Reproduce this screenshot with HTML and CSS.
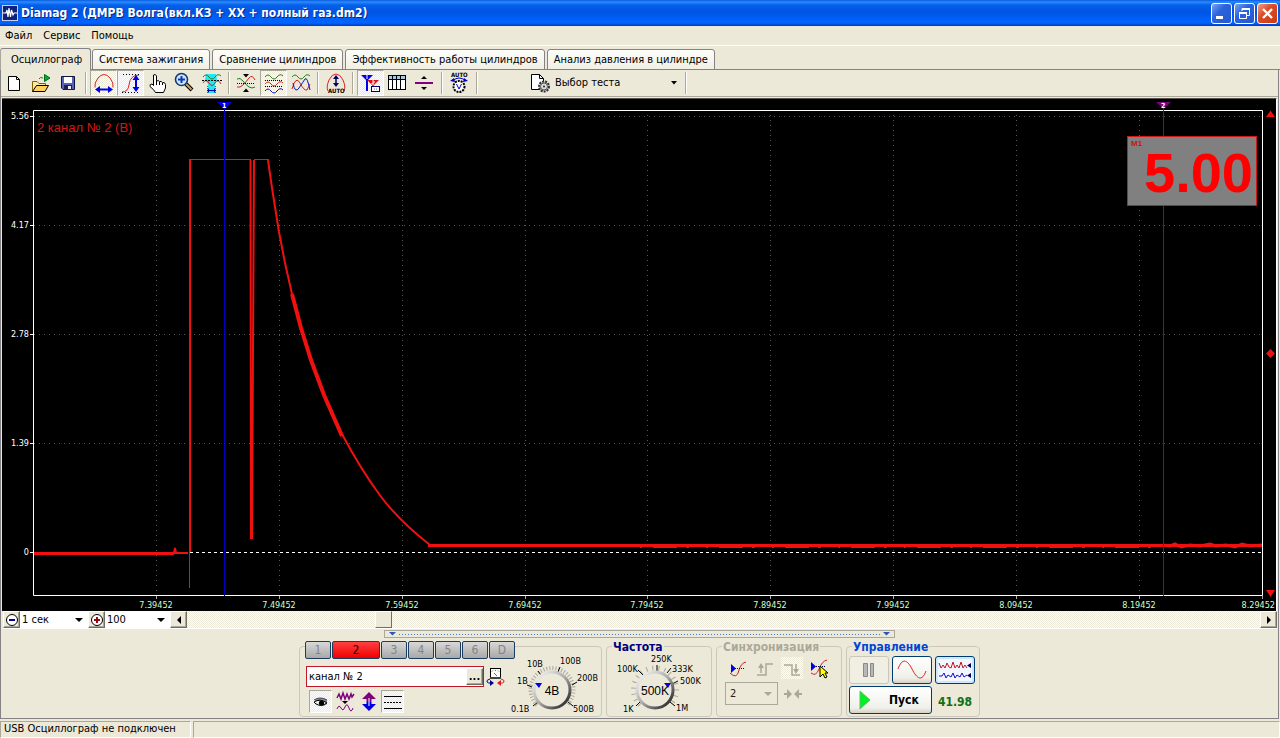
FILE: index.html
```html
<!DOCTYPE html>
<html lang="ru">
<head>
<meta charset="utf-8">
<title>Diamag 2</title>
<link rel="stylesheet" href="styles.css">
</head>
<body>
<header class="titlebar">
  <svg class="app-icon" width="16" height="16" viewBox="0 0 16 16"><rect width="16" height="16" fill="#c8d4e8"/><rect x="1" y="1" width="14" height="14" fill="#10207c"/><path d="M1 8H4L5 5L6 12L7 3L8.500 12L9.500 5L11 10L12 8H15" fill="none" stroke="#fff" stroke-width="1.200"/></svg>
  <h1 class="title">Diamag 2 (ДМРВ Волга(вкл.КЗ + ХХ + полный газ.dm2)</h1>
  <button class="win" aria-label="Свернуть"><svg width="19" height="19"><path d="M4 13.500H11" stroke="#fff" stroke-width="3"/></svg></button>
  <button class="win" aria-label="Восстановить"><svg width="19" height="19" fill="none" stroke="#fff"><path d="M7 7V4.500H14.500V11.500H12" /><path d="M7 5H15" stroke-width="2"/><path d="M4.500 8.500H11.500V14.500H4.500Z"/><path d="M4 9H12" stroke-width="2"/></svg></button>
  <button class="win close" aria-label="Закрыть"><svg width="19" height="19"><path d="M5 5L14 14M14 5L5 14" stroke="#fff" stroke-width="2.400"/></svg></button>
</header>
<nav class="menu"><button>Файл</button><button>Сервис</button><button>Помощь</button></nav>
<nav class="tabs">
  <button class="tab active">Осциллограф</button><button class="tab">Система зажигания</button><button class="tab">Сравнение цилиндров</button><button class="tab">Эффективность работы цилиндров</button><button class="tab">Анализ давления в цилиндре</button>
</nav>
<main class="frame">
  <div class="toolbar">
    <button class="tool" aria-label="Новый"><svg width="22" height="22"><path d="M4.500 4.500H12.500L15.500 7.500V18.500H4.500Z" fill="#fff" stroke="#000"/><path d="M12.500 4.500V7.500H15.500" fill="none" stroke="#000"/></svg></button>
    <button class="tool" aria-label="Открыть"><svg width="22" height="22"><path d="M1.500 19.500V9.500H6L8 11.500H14.500V14" fill="#ffe9a0" stroke="#806000"/><path d="M1.500 19.500L5.500 13.500H17.500L14 19.500Z" fill="#ffd060" stroke="#000"/><path d="M13.500 2.500V9.500L19 6Z" fill="#00b030" stroke="#006818"/><path d="M8 7Q9 4.500 12 6" fill="none" stroke="#555"/></svg></button>
    <button class="tool" aria-label="Сохранить"><svg width="22" height="22"><path d="M3.500 4.500H16.500V17.500H5L3.500 16Z" fill="#5860c0" stroke="#101040"/><rect x="6" y="5" width="8" height="6" fill="#fff"/><path d="M6 13H14V18H6Z" fill="#202050"/><rect x="10" y="14" width="3" height="3" fill="#eee"/></svg></button>
    <i class="sep"></i>
    <button class="tool on" aria-label="Ширина"><svg width="22" height="22"><path d="M2 15.500Q1 11 5 6Q8 2.500 11 2.500T17 6Q21 11 20 15.500" fill="none" stroke="#e02020"/><path d="M6 17.500H16" stroke="#0000e0" stroke-width="2"/><path d="M2 17.500L7 14V21ZM20 17.500L15 14V21Z" fill="#0000e0"/></svg></button>
    <button class="tool on" aria-label="Высота"><svg width="22" height="22"><path d="M2 20Q8 20 9 13Q10 3 19 3" fill="none" stroke="#e02020"/><path d="M3 2.500H21M2 20.500H20" stroke="#000" stroke-dasharray="1 2"/><path d="M16 6V17" stroke="#0000e0" stroke-width="2"/><path d="M16 3L12.500 8H19.500ZM16 20L12.500 15H19.500Z" fill="#0000e0"/></svg></button>
    <button class="tool" aria-label="Рука"><svg width="22" height="22"><path d="M6.500 3Q8.500 1.500 9.500 4V9Q11.500 8 12.500 9.500Q14.500 9 15.500 10.500Q18 10 18.500 12.500V16L16.500 20.500H8.500Q7 17.500 3 14.500Q2.500 12 5 12L6.500 13.500Z" fill="#fff" stroke="#000"/><path d="M9.500 9V13M12.500 10V13M15.500 11V13" stroke="#000"/></svg></button>
    <button class="tool" aria-label="Лупа"><svg width="22" height="22"><path d="M12 12L18 18" stroke="#000" stroke-width="4"/><path d="M12 12L17.500 17.500" stroke="#d0a050" stroke-width="2"/><circle cx="7.500" cy="7.500" r="6" fill="#c8e8ff" stroke="#183870" stroke-width="1.600"/><path d="M4 7.500H11M7.500 4V11" stroke="#1038b0" stroke-width="2"/></svg></button>
    <button class="tool" aria-label="Область"><svg width="22" height="22"><path d="M5 2H15L16 8L14 12V21H7V12L4 8Z" fill="#20e8f0"/><path d="M2 5Q5 1 8 5T14 5T20 4" fill="none" stroke="#208020"/><path d="M2 11Q5 6 8 11T14 11T20 12" fill="none" stroke="#d02020"/><path d="M1 8.500H21" stroke="#000" stroke-dasharray="2 1"/><path d="M6.500 14V21M14.500 14V21" stroke="#088" stroke-dasharray="1 1"/><path d="M8 18.500H13" stroke="#00a"/><path d="M6 18.500L8 16V21ZM15 18.500L13 16V21Z" fill="#00a"/></svg></button>
    <i class="sep"></i>
    <button class="tool" aria-label="Совместить"><svg width="22" height="22" fill="none"><path d="M1 7Q4 5 7 9T13 15T19 15" stroke="#208020"/><path d="M1 15Q4 16 7 13T13 6T19 8" stroke="#d02020"/><path d="M1 11.500H19" stroke="#000" stroke-dasharray="1 1"/><path d="M7 2H13L10 5.500ZM7 20H13L10 16.500Z" fill="#000"/></svg></button>
    <button class="tool on" aria-label="Разнести"><svg width="22" height="22" fill="none"><path d="M2 5Q5 1 8 5T14 5T20 4" stroke="#208020"/><path d="M2 8.500H20M2 14.500H20" stroke="#000" stroke-dasharray="1 1"/><path d="M2 12Q5 8 8 12T14 12T20 11" stroke="#d02020"/><path d="M2 19Q5 15 8 19T14 19T20 18" stroke="#1010c0"/></svg></button>
    <button class="tool" aria-label="Наложить"><svg width="22" height="22" fill="none"><path d="M2 5Q5 1 8 5T14 5T20 4" stroke="#208020"/><path d="M2 17Q6 3 10 11T17 18L20 12" stroke="#d02020"/><path d="M3 11Q5 22 9 16T15 7T20 18" stroke="#1010c0"/></svg></button>
    <i class="sep"></i>
    <button class="tool" aria-label="Авто высота"><svg width="22" height="22"><path d="M3 19Q1 15 4 8Q7 2 11 2T18 8Q21 15 19 19" fill="none" stroke="#e02020"/><path d="M11 5V13" stroke="#006" stroke-width="1.500"/><path d="M11 3L8 7H14ZM11 15L8 11H14Z" fill="#006"/><text class="tiny" x="3" y="21">AUTO</text></svg></button>
    <i class="sep"></i>
    <button class="tool on" aria-label="Маркеры"><svg width="22" height="22"><path d="M1 3H13L7 9Z" fill="#0000e0"/><path d="M7 7V19" stroke="#0000e0" stroke-width="2"/><path d="M7 8H19L13 14Z" fill="#e01010"/><path d="M13 11V19" stroke="#e01010"/><path d="M7 3V7M12 9H14V11H12V12H14" stroke="#fff" fill="none"/><rect x="11.500" y="14.500" width="8" height="5" fill="#fff" stroke="#006"/><path d="M14 17H17" stroke="#66c" stroke-dasharray="1 1"/></svg></button>
    <button class="tool" aria-label="Таблица"><svg width="22" height="22"><rect x="1.500" y="3.500" width="17" height="14" fill="#fff" stroke="#000"/><rect x="2" y="4" width="16" height="3" fill="#a8c8e8"/><path d="M2 7.500H18M5.500 4V17M9.500 4V17M13.500 4V17" stroke="#000"/></svg></button>
    <button class="tool" aria-label="Линия"><svg width="22" height="22"><path d="M1 11H19" stroke="#800080" stroke-width="2"/><path d="M10 4L7 7H13ZM10 18L7 15H13Z"/></svg></button>
    <i class="sep"></i>
    <button class="tool" aria-label="Авто вольтметр"><svg width="22" height="22"><text class="tiny" x="2" y="5">AUTO</text><path d="M4 8.500Q7 6 10 6T17 8.500" fill="none" stroke="#0000c0"/><path d="M1 9L5 6L6 10ZM19 9L15 6L14 10Z" fill="#0000c0"/><circle cx="10" cy="14.500" r="5.500" fill="#fff" stroke="#000" stroke-width="2" stroke-dasharray="2 1"/><path d="M7.500 12L10 17L12.500 12" fill="none" stroke="#0000c0"/></svg></button>
    <i class="sep"></i>
    <button class="test"><svg width="22" height="22"><path d="M2.500 2.500H10.500L14.500 6.500V17.500H2.500Z" fill="#fff" stroke="#000"/><path d="M10.500 2.500V6.500H14.500" fill="none" stroke="#000"/><circle cx="15" cy="14.500" r="5" fill="#ccc" stroke="#333" stroke-width="2" stroke-dasharray="2 1"/><circle cx="15" cy="14.500" r="3.500" fill="#ddd" stroke="#555"/><circle cx="15" cy="14.500" r="1" fill="#222"/></svg><span>Выбор теста</span><svg width="7" height="4"><path d="M0 0H6L3 3.500Z"/></svg></button>
    <i class="sep"></i>
  </div>

  <div class="scope">
    <svg class="plot" viewBox="3 99 1273 512" role="img" aria-label="Осциллограмма">
      <g stroke="#585858" stroke-dasharray="1 4" fill="none">
        <path d="M34 116.500H1262M34 225.500H1262M34 334.500H1262M34 443.500H1262"/>
        <path d="M156.500 115V595M279.500 115V595M402.500 115V595M525.500 115V595M647.500 115V595M770.500 115V595M893.500 115V595M1016.500 115V595M1139.500 115V595"/>
      </g>
      <path d="M34 552.500H1262" stroke="#fff" stroke-dasharray="3 3"/>
      <g fill="none" stroke="#f01010">
        <path d="M34 553H174L175 548L176 553H188" stroke-width="2"/>
        <path d="M34 554H174" stroke-width="2"/>
        <path d="M189.500 588V480"/>
        <path d="M190 552V160" stroke-width="2"/>
        <path d="M189 159.500H251M254 159.500H269"/>
        <path d="M250.500 160L251 538L252 538L254 160" stroke-width="2"/>
        <path d="M268 160L272 188L279 232L285 263L292 294L301 328L311 360L324 395L342 434Q360 468 379 494T430 545" stroke-width="2"/>
        <path d="M292 294L301 328L311 360L324 395L342 436" stroke-width="4"/>
        <path d="M428 545.500H1262" stroke-width="3"/>
        <path d="M640 546H1163" stroke-width="4" stroke-dasharray="2 11 24 9 3 17"/>
        <path d="M1163 545L1170 546L1175 544L1181 547L1190 545L1200 546L1210 544L1216 546L1226 545L1235 547L1242 544L1250 546L1262 545" stroke-width="3"/>
      </g>
      <path d="M33.500 110.500H1262.500V595.500H33.500Z" fill="none" stroke="#fff"/>
      <path d="M30 116.500H34M30 225.500H34M30 334.500H34M30 443.500H34M30 552.500H34" stroke="#fff"/>
      <path d="M156.500 596V599M279.500 596V599M402.500 596V599M525.500 596V599M647.500 596V599M770.500 596V599M893.500 596V599M1016.500 596V599M1139.500 596V599M1262.500 596V599" stroke="#aaa"/>
      <path d="M224.500 104V596" stroke="#0000c0"/><path d="M217 102H232L224.500 109Z" fill="#0000e0"/>
      <path d="M1163.500 104V596" stroke="#780878"/><path d="M1156 102H1171L1163.500 109Z" fill="#800080"/>
      <g class="mark"><text x="222" y="108">1</text><text x="1161" y="108">2</text></g>
      <g class="axis-y"><text x="29" y="119">5.56</text><text x="29" y="228">4.17</text><text x="29" y="337">2.78</text><text x="29" y="446">1.39</text><text x="29" y="555">0</text></g>
      <g class="axis-x"><text x="156" y="608">7.39452</text><text x="279" y="608">7.49452</text><text x="402" y="608">7.59452</text><text x="525" y="608">7.69452</text><text x="647" y="608">7.79452</text><text x="770" y="608">7.89452</text><text x="893" y="608">7.99452</text><text x="1016" y="608">8.09452</text><text x="1139" y="608">8.19452</text><text class="last" x="1275" y="608">8.29452</text></g>
      <text class="channel-label" x="37" y="132">2 канал № 2 (В)</text>
      <path d="M1266 117H1275L1270.500 110.500ZM1266 590H1275L1270.500 597ZM1266 353.500L1270.500 349L1275 353.500L1270.500 358Z" fill="#f01010"/>
      <rect x="1127.500" y="136.500" width="129" height="69" fill="#808080" stroke="#d01818"/>
      <text class="meter-name" x="1131" y="146">M1</text>
      <text class="meter" x="1144" y="192">5.00</text>
    </svg>
  </div>

  <div class="timebar">
    <button class="raised" aria-label="Уменьшить"><svg width="14" height="14"><circle cx="7" cy="7" r="5.500" fill="#fff" stroke="#000"/><path d="M4 7H10" stroke="#000090" stroke-width="2"/></svg></button>
    <select class="combo combo-time" aria-label="Время"><option>1 сек</option></select>
    <button class="raised" aria-label="Увеличить"><svg width="14" height="14"><circle cx="7" cy="7" r="5.500" fill="#fff" stroke="#000"/><path d="M4 7H10M7 4V10" stroke="#a00010" stroke-width="2"/></svg></button>
    <select class="combo combo-scale" aria-label="Масштаб"><option>100</option></select>
    <button class="raised" aria-label="Назад"><svg width="8" height="8"><path d="M6 0V8L2 4Z"/></svg></button>
    <div class="track"><div class="thumb"></div></div>
    <button class="raised" aria-label="Вперёд"><svg width="8" height="8"><path d="M2 0V8L6 4Z"/></svg></button>
  </div>

  <div class="splitter"><svg width="7" height="4"><path d="M0 0H7L3.500 3.500Z" fill="#2858b8"/></svg><i></i><svg width="7" height="4"><path d="M0 0H7L3.500 3.500Z" fill="#2858b8"/></svg></div>

  <div class="panels">
    <section class="group channel">
      <div class="channel-main">
        <div class="channels"><button>1</button><button class="current">2</button><button>3</button><button>4</button><button>5</button><button>6</button><button>D</button></div>
        <div class="name-row">
          <div class="name-box"><input aria-label="Имя канала" value="канал № 2"><button class="raised" aria-label="Выбрать">...</button></div>
          <svg width="20" height="20"><rect x="4.500" y="1.500" width="10" height="9" fill="#fff" stroke="#000"/><path d="M6 4.500L7 3.500M9.500 3V4M12 3.500L13 4.500M8 6L11 9" stroke="#484"/><path d="M4 11H15" stroke="#444" stroke-width="2"/><path d="M4 12Q0 13 1 15Q2 16.500 6 16" fill="none" stroke="#000090"/><path d="M4 13V19L8 16Z" fill="#000090"/><path d="M15 12Q19 13 18 15Q17 16.500 14 16" fill="none" stroke="#e02020"/><path d="M15 13V19L11 16Z" fill="#e02020"/></svg>
        </div>
        <div class="flags">
          <button class="flag on" aria-label="Видимость"><svg width="22" height="22"><path d="M5 9Q11 5 17 9V13Q11 18 5 12Z" fill="#888"/><path d="M4 11Q10 7 17 12Q11 16 6 13Z" fill="#eee" stroke="#000"/><path d="M4 9Q10 5 17 9" fill="none" stroke="#444"/><circle cx="11.500" cy="12" r="2.600"/></svg></button>
          <button class="flag" aria-label="Сглаживание"><svg width="22" height="22" fill="none" stroke="#800080"><path d="M3 7L5 3L7 8L9 2L11 8L13 3L15 8L17 3L18 6L20 3" stroke-width="1.500"/><path d="M3 18Q5 13 7 17T11 16T15 17T19 17"/><path d="M8 10H14L11 13Z" fill="#000" stroke="none"/></svg></button>
          <button class="flag" aria-label="Инверсия"><svg width="22" height="22"><path d="M11 1L18 8H13.500V11H8.500V8H4Z" fill="#800080"/><path d="M11 20L18 13H13.500V11H8.500V13H4Z" fill="#0000e0"/><path d="M11 7V15" stroke="#fff"/></svg></button>
          <button class="flag on" aria-label="Линии"><svg width="22" height="22"><path d="M2 5.500H20M2 17.500H20" stroke="#000"/><path d="M2 11.500H20" stroke="#000" stroke-dasharray="2 1"/></svg></button>
        </div>
      </div>
      <svg class="knob" width="87" height="68" viewBox="515 647 87 68">
        <defs><linearGradient id="metal" x1="0" y1="0" x2="1" y2="1"><stop offset="0" stop-color="#fff"/><stop offset=".5" stop-color="#aaa"/><stop offset="1" stop-color="#111"/></linearGradient></defs>
        <path d="M537 705A21.500 21.500 0 1 1 567 705" fill="none" stroke="#aaa797" stroke-width="4" stroke-dasharray="1 2"/>
        <path d="M533 706L538 702M527 685L532 687M538 671L541 675M560 667L558 672M577 682L572 685M573 706L568 702" stroke="#000"/>
        <circle cx="552" cy="690" r="18" fill="#ece9d8" stroke="url(#metal)" stroke-width="3"/>
        <path d="M535 683H542L539 688Z" fill="#0000e0"/>
        <g class="scale"><text x="511" y="712">0.1В</text><text x="517" y="684">1В</text><text x="527" y="667">10В</text><text x="560" y="664">100В</text><text x="577" y="681">200В</text><text x="573" y="712">500В</text></g>
        <text class="value" x="552" y="695">4В</text>
      </svg>
    </section>

    <section class="group freq">
      <h2 class="navy">Частота</h2>
      <svg class="knob" width="102" height="62" viewBox="608 654 102 62">
        <path d="M641 705A21.500 21.500 0 1 1 671 705" fill="none" stroke="#aaa797" stroke-width="5" stroke-dasharray="1 5"/>
        <path d="M637 706L641 702M639 670L644 675M658 665V671M672 668L668 673M679 681L673 684M671 702L676 706" stroke="#000"/>
        <circle cx="656" cy="690" r="18" fill="#ece9d8" stroke="url(#metal)" stroke-width="3"/>
        <g class="scale"><text x="618" y="672">100K</text><text x="652" y="662">250K</text><text x="673" y="672">333K</text><text x="681" y="684">500K</text><text x="624" y="712">1K</text><text x="677" y="711">1M</text></g>
        <text class="value" x="656" y="695">500K</text>
        <path d="M665 683H672L669 688Z" fill="#0000e0"/>
      </svg>
    </section>

    <section class="group sync">
      <h2 class="dim">Синхронизация</h2>
      <div class="row">
        <button class="sync-tool" aria-label="Уровень"><svg width="22" height="22"><path d="M3 16Q10 23 12 13Q14 6 19 5" fill="none" stroke="#d02020"/><path d="M4 11.500H18" stroke="#006" stroke-dasharray="1 1"/><path d="M4 7V16L9 11.500Z" fill="#0000e0"/></svg></button>
        <button class="sync-tool" disabled aria-label="Фронт"><svg width="22" height="22" fill="none" stroke="#aca899" stroke-width="1.500"><path d="M3 18H12V7H19M7 16V9"/><path d="M7 6L4 11H10Z" fill="#aca899" stroke="none"/></svg></button>
        <button class="sync-tool checked" disabled aria-label="Спад"><svg width="22" height="22" fill="none" stroke="#aca899" stroke-width="1.500"><path d="M3 8H11V18H19M15 7V13"/><path d="M15 17L12 12H18Z" fill="#aca899" stroke="none"/></svg></button>
        <button class="sync-tool" aria-label="Курсор"><svg width="22" height="22"><path d="M3 16Q8 20 11 12Q14 4 19 3" fill="none" stroke="#d02020"/><path d="M4 9.500H18" stroke="#006" stroke-dasharray="1 1"/><path d="M3 5V14L8 9.500Z" fill="#0000e0"/><path d="M12 9V20L15 17L17 21L19 20L17 16H20Z" fill="#ff0" stroke="#000"/></svg></button>
      </div>
      <div class="row second">
        <select class="combo combo-sync" disabled aria-label="Канал синхронизации"><option>2</option></select>
        <svg width="20" height="12"><path d="M1 6H6M14 6H19" stroke="#aca899" stroke-width="2"/><path d="M4 1L9 6L4 11ZM16 1L11 6L16 11Z" fill="#aca899"/></svg>
      </div>
    </section>

    <section class="group control">
      <h2 class="blue">Управление</h2>
      <div class="control-grid">
        <button class="xp disabled" disabled aria-label="Пауза"><svg width="22" height="22"><path d="M5.500 4.500H9.500V17.500H5.500ZM12.500 4.500H15.500V17.500H12.500Z" fill="#b8b8b8" stroke="#888"/></svg></button>
        <button class="xp" aria-label="Синус"><svg width="30" height="22"><path d="M1 10C5 -1 10 0 15 10S25 23 29 12" fill="none" stroke="#e02020"/></svg></button>
        <button class="xp active" aria-label="Каналы"><svg width="34" height="22" fill="none"><path d="M1 4L3 9L5 6L7 9L9 4L11 8L13 9L15 3L17 9L19 6L21 9L23 3L25 9L27 6L29 9" stroke="#c01818"/><path d="M1 17H4L6 14L8 19L10 16L13 18L15 14L17 19L19 16L22 18L24 14L26 18L29 16" stroke="#1010c0"/><path d="M33 4V9L29 6.500ZM33 14V19L29 16.500Z" fill="#006"/></svg></button>
        <button class="xp start"><svg width="12" height="20"><path d="M1 1L11 10L1 19Z" fill="#00f020" stroke="#60c070"/></svg><span>Пуск</span></button>
        <output class="counter">41.98</output>
      </div>
    </section>
  </div>
</main>
<footer class="status"><div class="status-main">USB Осциллограф не подключен</div><div class="status-rest"></div></footer>
</body>
</html>
```
FILE: styles.css
```css
* { box-sizing: border-box; }
body {
  margin: 0;
  min-height: 100vh;
  display: flex;
  flex-direction: column;
  background: #ece9d8;
  color: #000;
  font: 11px/14px "DejaVu Sans Condensed", "Liberation Sans", sans-serif;
}
button, input, select { font: inherit; color: inherit; margin: 0; padding: 0; }
button { display: flex; align-items: center; justify-content: center; background: none; border: 0; white-space: nowrap; }
svg { display: block; flex: none; }

.titlebar {
  height: 26px;
  display: flex;
  align-items: center;
  gap: 2px;
  padding: 0 2px;
  background: linear-gradient(#0a5be0, #2a8bff 2px, #0560e8 5px, #0054e3 12px, #0062fb 20px, #0064ff 23px, #0038c0);
}
.title { flex: 1; margin: 0 0 0 1px; color: #fff; font: bold 12px/16px "DejaVu Sans Condensed", sans-serif; text-shadow: 1px 1px #06268c; }
.win { width: 21px; height: 21px; border: 1px solid #fff; border-radius: 3px; background: linear-gradient(135deg, #7aa4f4, #2c62dc 40%, #2458d0); }
.close { background: linear-gradient(135deg, #f0a088, #dc4c28 40%, #c83c10); }

.menu { height: 20px; display: flex; gap: 11px; padding: 1px 5px 0; border-bottom: 1px solid #fff; }

.tabs { height: 24px; display: flex; align-items: flex-end; gap: 2px; padding-top: 2px; box-shadow: inset 0 -1px #848284; }
.tab { height: 21px; padding: 0 6px; border: 1px solid #848284; border-radius: 3px 3px 0 0; background: linear-gradient(#fdfdfa, #f2f0e4); }
.tab.active { height: 22px; padding: 0 8px 0 10px; margin-right: -1px; border-bottom: 0; border-left-color: #aca899; background: #ece9d8; }

.frame { flex: 1; display: flex; flex-direction: column; border: 1px solid #848284; border-width: 0 1px 1px; margin: 0 1px 0 0; }
.toolbar { height: 27px; display: flex; align-items: center; border-bottom: 1px solid #aca899; }
.tool { width: 27px; height: 26px; }
.tool.on, .flag.on {
  border: 1px solid;
  border-color: #aca899 #fff #fff #aca899;
  background: repeating-conic-gradient(#fff 0 25%, #ece9d8 0 50%) 0 0 / 2px 2px;
}
.sep { width: 8px; height: 22px; background: linear-gradient(90deg, transparent 3px, #aca899 3px 4px, #fff 4px 5px, transparent 5px); }
.test { width: 153px; height: 26px; margin-left: 48px; gap: 4px; padding: 0 4px 0 0; }
.test span { flex: 1; text-align: left; }
.tiny { font: bold 6px "DejaVu Sans Condensed", sans-serif; }

.scope { margin: 1px 1px 0; padding-left: 1px; background: #000; border-top: 1px solid #55534a; border-right: 1px solid #fff; }
.plot { width: 100%; height: auto; }
.axis-y, .axis-x, .mark { font: 9px "DejaVu Sans Condensed", sans-serif; fill: #fff; }
.axis-y { text-anchor: end; }
.axis-x { text-anchor: middle; fill: #d0ffd0; }
.axis-x .last { text-anchor: end; }
.mark { font-size: 7px; font-weight: bold; }
.channel-label { font: 13px "Liberation Sans", sans-serif; fill: #d01818; }
.meter { font: bold 56px "Liberation Sans", sans-serif; fill: #f00; }
.meter-name { font: bold 8px "Liberation Sans", sans-serif; fill: #d01010; }

.timebar { height: 18px; display: flex; margin: 0 1px 0 2px; border-bottom: 1px solid #fff; }
.raised { width: 17px; border: 1px solid; border-color: #fff #716f64 #716f64 #fff; background: #ece9d8; box-shadow: inset -1px -1px #aca899; }
.combo {
  appearance: none;
  border: 0;
  border-radius: 0;
  padding: 0 2px;
  background: #fff url("data:image/svg+xml,%3Csvg xmlns='http://www.w3.org/2000/svg' width='8' height='4'%3E%3Cpath d='M0 0H8L4 4Z'/%3E%3C/svg%3E") right 5px center no-repeat;
}
.combo-time { width: 68px; }
.combo-scale { width: 65px; }
.track { flex: 1; background: repeating-conic-gradient(#fff 0 25%, #ece9d8 0 50%) 0 0 / 2px 2px; }
.thumb { width: 17px; height: 17px; margin-left: 17.5%; background: #ece9d8; border: 1px solid; border-color: #fff #716f64 #716f64 #fff; }

.splitter { width: 40%; height: 8px; margin: 1px auto 0; display: flex; align-items: center; gap: 3px; padding: 0 4px; border: 1px solid #aca899; }
.splitter i { flex: 1; height: 1px; background: repeating-linear-gradient(90deg, #4878c8 0 1px, transparent 1px 3px); }

.panels { flex: 1; display: flex; justify-content: center; gap: 4px; padding: 8px 0 1px; }
.group { border: 1px solid #cdc9b8; border-radius: 4px; }
.group h2 { width: max-content; margin: -7px 0 0 5px; padding: 0 1px; background: #ece9d8; font: bold 12px/14px "DejaVu Sans Condensed", sans-serif; }
.navy { color: #000080; }
.dim { color: #aca899; }
.blue { color: #0046d5; }

.channel { width: 303px; display: flex; justify-content: space-between; padding-left: 5px; }
.channel-main { display: flex; flex-direction: column; margin-top: -6px; }
.channels { display: flex; gap: 1px; background: #ece9d8; }
.channels button { width: 26px; height: 18px; border: 1px solid #1c3c60; border-radius: 2px; background: linear-gradient(#d8d8d8, #a8a8a8); color: #848484; font-size: 12px; }
.channels .current { width: 48px; background: linear-gradient(#ff4040, #f00000); color: #300; }
.name-row { display: flex; align-items: center; gap: 2px; margin: 7px 0 0 1px; }
.name-box { width: 178px; height: 21px; display: flex; border: 1px solid #c01828; background: #fff; padding: 1px 0; }
.name-box input { flex: 1; min-width: 0; border: 0; padding: 0 2px; background: none; }
.name-box .raised { font-weight: bold; }
.flags { display: flex; gap: 1px; margin: 3px 0 0 4px; }
.flag { width: 23px; height: 23px; }
.knob { overflow: visible; }

.freq { width: 106px; }
.scale { font: 9px "DejaVu Sans Condensed", sans-serif; }
.value { font: 12px "Liberation Sans", sans-serif; text-anchor: middle; }

.sync { width: 126px; }
.row { display: flex; align-items: center; padding: 1px 0 0 7px; }
.second { padding: 2px 0 0 8px; gap: 5px; }
.sync-tool { width: 27px; height: 25px; }
.checked svg { background: repeating-conic-gradient(#fff 0 25%, #ece9d8 0 50%) 0 0 / 2px 2px; }
.combo-sync {
  width: 53px;
  height: 23px;
  padding: 0 4px;
  border: 1px solid #aca899;
  background-color: #ece9d8;
  background-image: url("data:image/svg+xml,%3Csvg xmlns='http://www.w3.org/2000/svg' width='8' height='4'%3E%3Cpath d='M0 0H8L4 4Z' fill='%23aca899'/%3E%3C/svg%3E");
  opacity: 1;
  color: #222;
}

.control { width: 134px; }
.control-grid { display: grid; grid-template-columns: 40px 40px 40px; gap: 2px 3px; padding: 2px 2px 0; }
.xp { height: 28px; border: 1px solid #003c74; border-radius: 3px; background: linear-gradient(#fff, #f0f0ea 80%, #d6d0c5); }
.xp.disabled { border-color: #c9c7ba; background: #f1efe4; }
.xp.active { background: #f4f6ff; box-shadow: inset 0 0 0 2px #cee7ff; }
.xp.start { grid-column: span 2; font: bold 12px/14px "DejaVu Sans Condensed", sans-serif; justify-content: flex-start; gap: 18px; padding-left: 9px; }
.counter { align-self: center; justify-self: center; padding-top: 4px; color: #107010; font: bold 12px/14px "DejaVu Sans Condensed", sans-serif; }

.status { height: 19px; display: flex; gap: 2px; padding-top: 2px; }
.status div { border: 1px solid; border-color: #aca899 #fff #fff #aca899; padding: 0 3px; white-space: nowrap; }
.status-main { width: 191px; }
.status-rest { flex: 1; }
```
